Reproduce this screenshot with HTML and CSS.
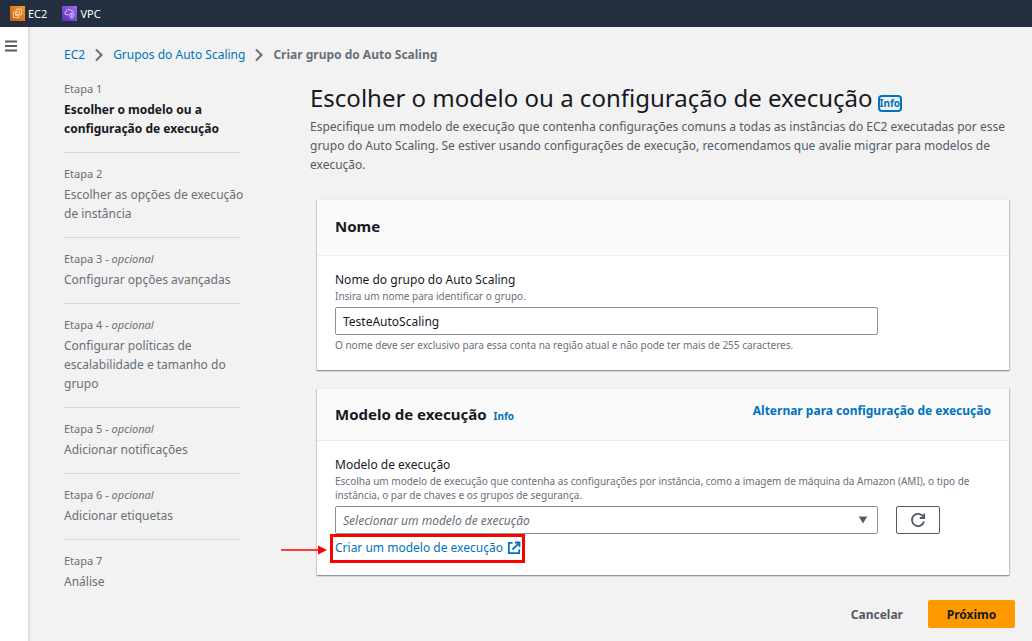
FILE: index.html
```html
<!DOCTYPE html>
<html lang="pt-BR">
<head>
<meta charset="utf-8">
<meta name="viewport" content="width=device-width, initial-scale=1">
<title>Criar grupo do Auto Scaling</title>
<link rel="stylesheet" href="styles.css">
</head>
<body>
<header class="topbar">
  <a class="service" href="#ec2">
    <svg class="service-icon" viewBox="0 0 15 15" aria-hidden="true"><defs><linearGradient id="ec2g" x1="0" y1="1" x2="1" y2="0"><stop offset="0" stop-color="#cc5a12"/><stop offset="1" stop-color="#f79a2c"/></linearGradient></defs><rect width="15" height="15" fill="url(#ec2g)"/><g fill="none" stroke="#ffe3c4" stroke-width=".9"><rect x="6" y="3.200" width="5.600" height="5.600" rx=".8"/><path d="M5.400 6.200H3.400v5.400h5.400V9.400"/><path d="M5.600 9.300V7.400l1.600-1.700h2.200v2l-1.600 1.600z"/></g></svg>
    EC2
  </a>
  <a class="service" href="#vpc">
    <svg class="service-icon" viewBox="0 0 15 15" aria-hidden="true"><defs><linearGradient id="vpcg" x1="0" y1="1" x2="1" y2="0"><stop offset="0" stop-color="#5a30b8"/><stop offset="1" stop-color="#a369f5"/></linearGradient></defs><rect width="15" height="15" fill="url(#vpcg)"/><g fill="none" stroke="#e6d6ff" stroke-width=".9"><path d="M6.500 8.700H4.200C2.300 8.500 2.400 6 4.200 5.800 4.300 3.100 8 2.400 9 4.800c1.700-.4 2.600.7 2.500 1.900"/><path d="M7.600 8.200 9.800 7.200l2.200 1c0 2-.7 3.300-2.200 4-1.500-.7-2.200-2-2.200-4zM9.800 7.200v5"/></g></svg>
    VPC
  </a>
</header>
<div class="layout">
  <aside class="rail">
    <button class="menu" type="button" aria-label="Abrir navegação"><svg viewBox="0 0 12 12"><path d="M0 1.500h12M0 6h12M0 10.500h12" stroke="#545b64" stroke-width="1.800"/></svg></button>
  </aside>
  <div class="page">
    <nav class="crumbs" aria-label="Trilha">
      <a href="#ec2">EC2</a>
      <svg class="chevron" viewBox="0 0 8 14" aria-hidden="true"><path d="M1 1.500 6.500 7 1 12.500"/></svg>
      <a href="#grupos">Grupos do Auto Scaling</a>
      <svg class="chevron" viewBox="0 0 8 14" aria-hidden="true"><path d="M1 1.500 6.500 7 1 12.500"/></svg>
      <strong>Criar grupo do Auto Scaling</strong>
    </nav>
    <div class="wizard">
      <ol class="steps">
        <li class="step current" aria-current="step"><span class="step-label">Etapa 1</span><span class="step-title">Escolher o modelo ou a configuração de execução</span></li>
        <li class="step"><span class="step-label">Etapa 2</span><span class="step-title">Escolher as opções de execução de instância</span></li>
        <li class="step"><span class="step-label">Etapa 3 - <em>opcional</em></span><span class="step-title">Configurar opções avançadas</span></li>
        <li class="step"><span class="step-label">Etapa 4 - <em>opcional</em></span><span class="step-title">Configurar políticas de escalabilidade e tamanho do grupo</span></li>
        <li class="step"><span class="step-label">Etapa 5 - <em>opcional</em></span><span class="step-title">Adicionar notificações</span></li>
        <li class="step"><span class="step-label">Etapa 6 - <em>opcional</em></span><span class="step-title">Adicionar etiquetas</span></li>
        <li class="step"><span class="step-label">Etapa 7</span><span class="step-title">Análise</span></li>
      </ol>
      <main class="main">
        <div class="heading">
          <h1>Escolher o modelo ou a configuração de execução</h1>
          <a class="info focused" href="#info">Info</a>
        </div>
        <p class="intro">Especifique um modelo de execução que contenha configurações comuns a todas as instâncias do EC2 executadas por esse grupo do Auto Scaling. Se estiver usando configurações de execução, recomendamos que avalie migrar para modelos de execução.</p>
        <form class="form">
          <section class="panel">
            <div class="panel-head name-head"><h2>Nome</h2></div>
            <div class="panel-body">
              <label class="label" for="group">Nome do grupo do Auto Scaling</label>
              <p class="hint">Insira um nome para identificar o grupo.</p>
              <input class="control" id="group" type="text" value="TesteAutoScaling">
              <p class="hint constraint">O nome deve ser exclusivo para essa conta na região atual e não pode ter mais de 255 caracteres.</p>
            </div>
          </section>
          <section class="panel">
            <div class="panel-head">
              <div class="title-row"><h2>Modelo de execução</h2><a class="info" href="#info-modelo">Info</a></div>
              <a class="switch" href="#alternar">Alternar para configuração de execução</a>
            </div>
            <div class="panel-body">
              <label class="label" for="template">Modelo de execução</label>
              <p class="hint">Escolha um modelo de execução que contenha as configurações por instância, como a imagem de máquina da Amazon (AMI), o tipo de instância, o par de chaves e os grupos de segurança.</p>
              <div class="select-row">
                <div class="select-wrap">
                  <select class="control select" id="template"><option>Selecionar um modelo de execução</option></select>
                  <svg class="caret" viewBox="0 0 9 8" aria-hidden="true"><path d="M.3.500h8.400L4.500 7.500z"/></svg>
                </div>
                <button class="refresh" type="button" aria-label="Atualizar"><svg viewBox="0 0 16 16"><path d="M14 9.500A6.100 6.100 0 1 1 13.300 4.800L14 6M14.200 1.500V6H9.800"/></svg></button>
              </div>
              <div class="create">
                <a href="#criar">Criar um modelo de execução <svg class="external" viewBox="0 0 14 14" aria-hidden="true"><path d="M5.500 1.800H1.800v10.400h10.400V8.500M8 1.500h4.500V6M12.200 1.800 5.500 8.500"/></svg></a>
                <svg class="arrow" viewBox="0 0 47 10" aria-hidden="true"><path d="M0 5h38" stroke="#f00" stroke-width="1.500"/><path d="M37 .500 46 5 37 9.500z" fill="#f00"/></svg>
                <span class="highlight"></span>
              </div>
            </div>
          </section>
          <div class="actions">
            <button class="cancel" type="button">Cancelar</button>
            <button class="next" type="submit">Próximo</button>
          </div>
        </form>
      </main>
    </div>
  </div>
</div>
</body>
</html>
```
FILE: styles.css
```css
* { box-sizing: border-box; }
body {
  margin: 0;
  min-height: 100vh;
  display: flex;
  flex-direction: column;
  background: #f2f2f2;
  color: #16191f;
  font: 12px/19px "Noto Sans", "Open Sans", sans-serif;
}
h1, h2, p, ol { margin: 0; padding: 0; }
a { color: #0073bb; text-decoration: none; }
button, input, select { font: inherit; color: inherit; }
svg { display: block; }

.topbar {
  display: flex;
  align-items: center;
  gap: 15px;
  height: 27px;
  padding: 0 10px;
  background: #232f3e;
}
.service {
  display: flex;
  align-items: center;
  gap: 3px;
  color: #fff;
  font-size: 11px;
}
.service-icon { width: 15px; height: 15px; }

.layout { display: flex; flex: 1; }
.rail {
  flex: none;
  width: 30px;
  padding: 11px 5px;
  background: #fff;
  border-right: 2px solid #dcdedf;
}
.menu { padding: 0; border: 0; background: none; }
.menu svg { width: 12px; height: 12px; }

.page { flex: 1; min-width: 0; padding: 18px 17px 12px 34px; }
.crumbs { display: flex; align-items: center; gap: 10px; color: #687078; }
.chevron { width: 8px; height: 14px; fill: none; stroke: #687078; stroke-width: 2; }

.wizard { display: flex; gap: 70px; padding-top: 4px; }
.steps { flex: none; width: 176px; list-style: none; color: #687078; }
.step { padding: 12px 0 14px; border-bottom: 1px solid #d5dbdb; }
.step:last-child { border-bottom: 0; }
.step-label { display: block; margin-bottom: 2px; font-size: 11px; line-height: 18px; }
.step-title { display: block; margin-right: -10px; }
.current .step-title { color: #16191f; font-weight: 700; }

.main { flex: 1; min-width: 0; padding-top: 12px; }
.heading { display: flex; align-items: baseline; gap: 7px; margin-bottom: 1px; }
h1 { font-size: 24px; line-height: 36px; font-weight: 400; }
h2 { font-size: 15px; line-height: 24px; font-weight: 700; }
.info { font-size: 10px; line-height: 13px; font-weight: 700; }
.focused { border-radius: 2px; box-shadow: 0 0 0 2px #0073bb; }
.intro { color: #545b64; }

.form { padding-top: 25px; }
.panel {
  margin: 0 6px 18px 7px;
  background: #fff;
  border-top: 1px solid #eaeded;
  box-shadow: 0 1px 1px #8d9899, 1px 1px 1px #c5cccc, -1px 1px 1px #d5dada;
}
.panel-head {
  display: flex;
  justify-content: space-between;
  padding: 13px 18px 14px;
  background: #fafafa;
  border-bottom: 1px solid #eaeded;
}
.name-head { padding: 14px 18px 17px; }
.title-row { display: flex; align-items: baseline; gap: 7px; }
.switch { font-weight: 700; line-height: 17px; }
.panel-body { padding: 14px 18px 18px; }
.label { display: block; line-height: 19px; }
.hint { color: #687078; font-size: 10px; line-height: 14px; }
.control {
  display: block;
  width: 543px;
  max-width: 100%;
  height: 28px;
  margin-top: 4px;
  padding: 0 7px;
  border: 1px solid #879596;
  border-radius: 2px;
  background: #fff;
}
.constraint { margin-top: 3px; }
.select-row { display: flex; align-items: flex-end; gap: 18px; }
.select-wrap { position: relative; flex: 0 1 543px; }
.select { appearance: none; width: 100%; font-style: italic; color: #687078; }
.caret { position: absolute; right: 10px; bottom: 10px; width: 10px; height: 8px; fill: #545b64; pointer-events: none; }
.refresh {
  display: grid;
  place-items: center;
  width: 44px;
  height: 28px;
  padding: 0;
  border: 1px solid #545b64;
  border-radius: 2px;
  background: #fff;
}
.refresh svg { width: 16px; height: 16px; fill: none; stroke: #545b64; stroke-width: 1.8; }
.create { position: relative; width: fit-content; padding-top: 4px; }
.create a { display: flex; align-items: center; gap: 4px; }
.external { width: 14px; height: 14px; fill: none; stroke: #0073bb; stroke-width: 1.8; }
.highlight { position: absolute; inset: 0 -4px -6px -5px; border: 3px solid #f00; pointer-events: none; }
.arrow { position: absolute; top: 11px; left: -54px; width: 47px; height: 10px; }

.actions { display: flex; justify-content: flex-end; gap: 25px; padding-top: 7px; }
.actions button { height: 28px; border: 0; border-radius: 2px; font-weight: 700; }
.cancel { padding: 0; background: none; color: #545b64; }
.next { width: 87px; padding: 0; background: #ff9900; }
```
